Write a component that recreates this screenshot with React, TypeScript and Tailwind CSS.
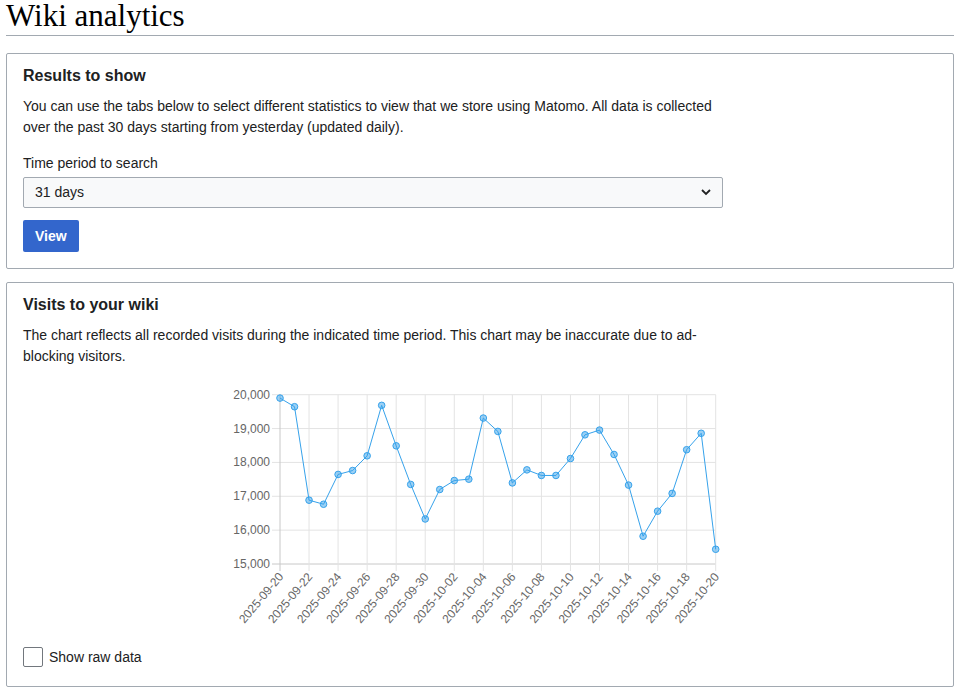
import { useState } from "react";

const VISITS = [
  19900, 19645, 16885, 16765, 17645, 17760, 18195, 19685, 18490, 17350, 16330,
  17200, 17465, 17505, 19310, 18915, 17395, 17780, 17615, 17615, 18115, 18815,
  18955, 18235, 17330, 15820, 16560, 17085, 18375, 18860, 15435,
];

const START = new Date(Date.UTC(2025, 8, 20));

function dayLabel(i: number) {
  const d = new Date(START.getTime() + i * 86400000);
  return d.toISOString().slice(0, 10);
}

// plot box in svg coords
const LEFT = 257;
const RIGHT = 692.7;
const TOP = 14.7;
const BOTTOM = 184;

const xAt = (i: number) => LEFT + ((RIGHT - LEFT) * i) / (VISITS.length - 1);
const yAt = (v: number) => BOTTOM - ((v - 15000) / 5000) * (BOTTOM - TOP);

function VisitsChart() {
  const ticks = [15000, 16000, 17000, 18000, 19000, 20000];
  const points = VISITS.map((v, i) => `${xAt(i)},${yAt(v)}`).join(" ");

  return (
    <svg width="700" height="260" className="mt-[13px] block" style={{ fontFamily: '"Liberation Sans", Arial, sans-serif' }}>
      {ticks.map((t) => (
        <g key={t}>
          <line x1={249} x2={RIGHT} y1={yAt(t)} y2={yAt(t)} stroke={t === 15000 ? "#c8c8c8" : "#e3e3e3"} strokeWidth="1" />
          <text x={247} y={yAt(t) + 4} textAnchor="end" fontSize="12" fill="#666">
            {t.toLocaleString("en-US")}
          </text>
        </g>
      ))}
      {VISITS.map((_, i) =>
        i % 2 === 0 ? (
          <g key={i}>
            <line x1={xAt(i)} x2={xAt(i)} y1={TOP} y2={BOTTOM + 7} stroke={i === 0 ? "#c8c8c8" : "#e3e3e3"} strokeWidth="1" />
            <text
              x={xAt(i) + 4}
              y={BOTTOM + 13}
              textAnchor="end"
              fontSize="12"
              fill="#666"
              transform={`rotate(-50 ${xAt(i) + 4} ${BOTTOM + 13})`}
            >
              {dayLabel(i)}
            </text>
          </g>
        ) : null
      )}
      <polyline points={points} fill="none" stroke="#36a2eb" strokeWidth="1" />
      {VISITS.map((v, i) => (
        <circle key={i} cx={xAt(i)} cy={yAt(v)} r="3.3" fill="rgba(54,162,235,0.5)" stroke="#36a2eb" strokeWidth="1" />
      ))}
    </svg>
  );
}

export default function App() {
  const [period, setPeriod] = useState("31");
  const [raw, setRaw] = useState(false);

  return (
    <div className="min-h-screen bg-white px-[6px] text-[14px] text-[#202122]" style={{ fontFamily: '"Liberation Sans", Arial, sans-serif' }}>
      <h1
        className="border-b border-[#a2a9b1] pb-[3px] text-[31px] leading-[32px] font-normal text-black"
        style={{ fontFamily: '"Liberation Serif", "Times New Roman", serif' }}
      >
        Wiki analytics
      </h1>

      <section className="mt-[17px] rounded-[2px] border border-[#a2a9b1] px-4 pt-[12px] pb-4">
        <h2 className="text-[16px] leading-5 font-bold">Results to show</h2>
        <p className="mt-[10px] max-w-[700px] leading-[21px]">
          You can use the tabs below to select different statistics to view that we store using Matomo. All data is collected
          over the past 30 days starting from yesterday (updated daily).
        </p>
        <label className="mt-[15px] block leading-[21px]">Time period to search</label>
        <div className="relative mt-[3px] w-[700px]">
          <select
            value={period}
            onChange={(e) => setPeriod(e.target.value)}
            className="h-[31px] w-full appearance-none rounded-[2px] border border-[#a2a9b1] bg-[#f8f9fa] px-[11px] text-[14px] text-[#202122] outline-none"
          >
            <option value="7">7 days</option>
            <option value="31">31 days</option>
            <option value="90">90 days</option>
          </select>
          <svg className="pointer-events-none absolute top-[11px] right-[12px]" width="10" height="8" viewBox="0 0 10 8">
            <path d="M1 2 L5 6 L9 2" fill="none" stroke="#202122" strokeWidth="1.8" />
          </svg>
        </div>
        <button className="mt-[12px] h-[32px] rounded-[2px] bg-[#3366cc] px-[12px] text-[14px] font-bold text-white">
          View
        </button>
      </section>

      <section className="mt-[13px] rounded-[2px] border border-[#a2a9b1] px-4 pt-[12px] pb-[19px]">
        <h2 className="text-[16px] leading-5 font-bold">Visits to your wiki</h2>
        <p className="mt-[10px] max-w-[700px] leading-[21px]">
          The chart reflects all recorded visits during the indicated time period. This chart may be inaccurate due to ad-blocking
          visitors.
        </p>
        <VisitsChart />
        <label className="mt-[7px] flex items-center gap-[6px]">
          <span
            onClick={() => setRaw(!raw)}
            className={`h-5 w-5 rounded-[2px] border ${raw ? "border-[#3366cc] bg-[#3366cc]" : "border-[#72777d] bg-white"}`}
          />
          <span className="leading-5">Show raw data</span>
        </label>
      </section>
    </div>
  );
}
